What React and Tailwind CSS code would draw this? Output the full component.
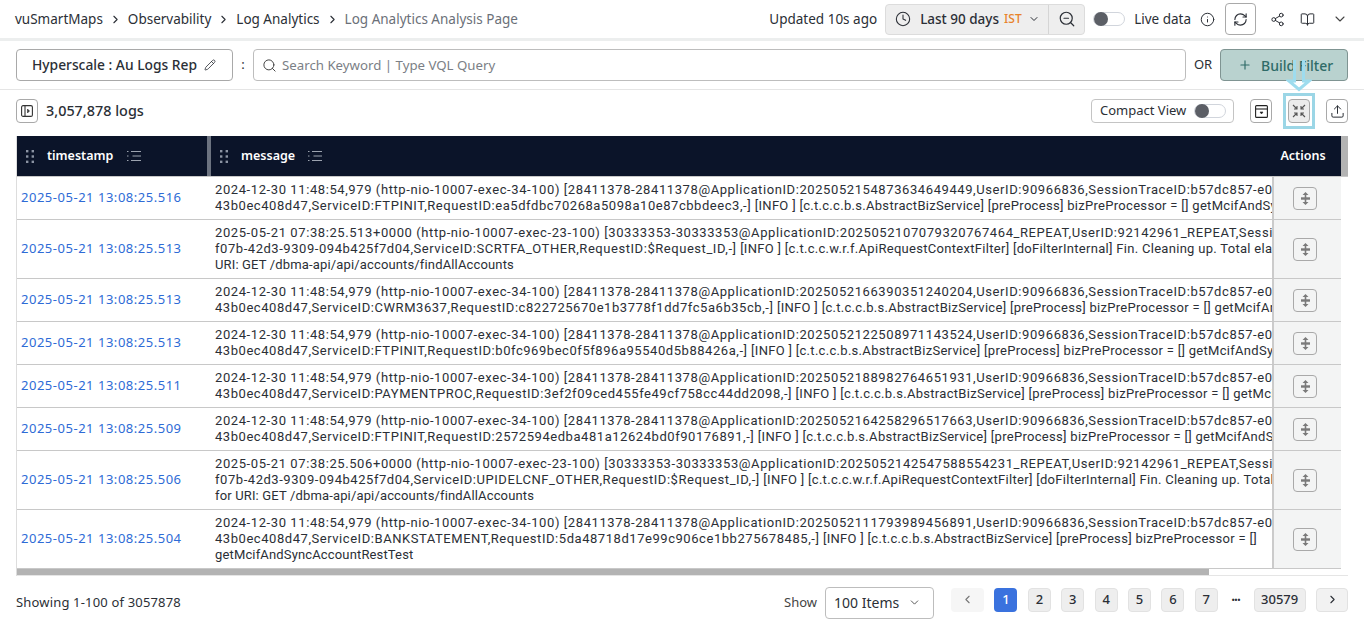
import React from "react";
import {
  BookOpen,
  ChevronDown,
  ChevronLeft,
  ChevronRight,
  Clock,
  Info,
  Pencil,
  Plus,
  RefreshCw,
  Search,
  Share2,
  Upload,
  ZoomOut,
} from "lucide-react";

const TAIL_BIZ = "[INFO ] [c.t.c.c.b.s.AbstractBizService] [preProcess] bizPreProcessor = [] getMcifAndSyncAccountRestTest";
const TAIL_CTX = "[INFO ] [c.t.c.c.w.r.f.ApiRequestContextFilter] [doFilterInternal] Fin. Cleaning up. Total elapsed time";

const bizLine = (appId) =>
  `2024-12-30 11:48:54,979 (http-nio-10007-exec-34-100) [28411378-28411378@ApplicationID:${appId},UserID:90966836,SessionTraceID:b57dc857-e0`;
const ctxLine = (stamp, appId) =>
  `2025-05-21 ${stamp}+0000 (http-nio-10007-exec-23-100) [30333353-30333353@ApplicationID:${appId}_REPEAT,UserID:92142961_REPEAT,SessionTraceID`;

const rows = [
  {
    time: "2025-05-21 13:08:25.516",
    first: bizLine("2025052154873634649449"),
    head: "43b0ec408d47,ServiceID:FTPINIT,RequestID:ea5dfdbc70268a5098a10e87cbbdeec3,-]",
    tail: TAIL_BIZ,
  },
  {
    time: "2025-05-21 13:08:25.513",
    first: ctxLine("07:38:25.513", "2025052107079320767464"),
    head: "f07b-42d3-9309-094b425f7d04,ServiceID:SCRTFA_OTHER,RequestID:$Request_ID,-]",
    tail: TAIL_CTX,
    last: "URI: GET /dbma-api/api/accounts/findAllAccounts",
  },
  {
    time: "2025-05-21 13:08:25.513",
    first: bizLine("2025052166390351240204"),
    head: "43b0ec408d47,ServiceID:CWRM3637,RequestID:c822725670e1b3778f1dd7fc5a6b35cb,-]",
    tail: TAIL_BIZ,
  },
  {
    time: "2025-05-21 13:08:25.513",
    first: bizLine("2025052122508971143524"),
    head: "43b0ec408d47,ServiceID:FTPINIT,RequestID:b0fc969bec0f5f896a95540d5b88426a,-]",
    tail: TAIL_BIZ,
  },
  {
    time: "2025-05-21 13:08:25.511",
    first: bizLine("2025052188982764651931"),
    head: "43b0ec408d47,ServiceID:PAYMENTPROC,RequestID:3ef2f09ced455fe49cf758cc44dd2098,-]",
    tail: TAIL_BIZ,
  },
  {
    time: "2025-05-21 13:08:25.509",
    first: bizLine("2025052164258296517663"),
    head: "43b0ec408d47,ServiceID:FTPINIT,RequestID:2572594edba481a12624bd0f90176891,-]",
    tail: TAIL_BIZ,
  },
  {
    time: "2025-05-21 13:08:25.506",
    first: ctxLine("07:38:25.506", "2025052142547588554231"),
    head: "f07b-42d3-9309-094b425f7d04,ServiceID:UPIDELCNF_OTHER,RequestID:$Request_ID,-]",
    tail: TAIL_CTX,
    last: "for URI: GET /dbma-api/api/accounts/findAllAccounts",
  },
  {
    time: "2025-05-21 13:08:25.504",
    first: bizLine("2025052111793989456891"),
    head: "43b0ec408d47,ServiceID:BANKSTATEMENT,RequestID:5da48718d17e99c906ce1bb275678485,-]",
    tail: "[INFO ] [c.t.c.c.b.s.AbstractBizService] [preProcess] bizPreProcessor = []",
    last: "getMcifAndSyncAccountRestTest",
  },
];

const pages = ["1", "2", "3", "4", "5", "6", "7"];

const Grip = () => (
  <svg width="8" height="13" viewBox="0 0 8 13" fill="#8b93a3">
    <rect x="0" y="0" width="2.4" height="2.4" />
    <rect x="5.6" y="0" width="2.4" height="2.4" />
    <rect x="0" y="5.3" width="2.4" height="2.4" />
    <rect x="5.6" y="5.3" width="2.4" height="2.4" />
    <rect x="0" y="10.6" width="2.4" height="2.4" />
    <rect x="5.6" y="10.6" width="2.4" height="2.4" />
  </svg>
);

const ListIcon = () => (
  <svg width="14" height="12" viewBox="0 0 14 12" stroke="#9ca3af" fill="none" strokeWidth="1">
    <path d="M4 1.5h10M5.5 6H14M4 10.5h10" />
    <path d="M0 1.5h1.5M0 6h1.5M0 10.5h1.5" />
  </svg>
);

const ShrinkIcon = () => (
  <svg width="14" height="14" viewBox="0 0 14 14" stroke="#555" fill="none" strokeWidth="1.1">
    <path d="M1 1l4 4M5 2v3H2M13 1L9 5M9 2v3h3M1 13l4-4M5 12V9H2M13 13L9 9M9 12V9h3" />
  </svg>
);

const SidebarIcon = () => (
  <svg width="12" height="12" viewBox="0 0 12 12" stroke="#333" fill="none" strokeWidth="1.1">
    <rect x="0.6" y="0.6" width="10.8" height="10.8" rx="1.5" />
    <path d="M4 0.6v10.8" />
    <path d="M6.5 4l2 2-2 2z" fill="#333" strokeWidth="0.6" />
  </svg>
);

const ArchiveIcon = () => (
  <svg width="13" height="13" viewBox="0 0 13 13" stroke="#222" fill="none" strokeWidth="1.1">
    <rect x="0.6" y="0.6" width="11.8" height="11.8" rx="1" />
    <path d="M0.6 4h11.8" />
    <path d="M5 7h3L6.5 9z" fill="#222" strokeWidth="0.6" />
  </svg>
);

const ExpandIcon = () => (
  <svg width="9" height="13" viewBox="0 0 9 13" fill="#7a7a7a">
    <path d="M4.5 0l3 3H1.5zM4.5 13l-3-3h6z" />
    <rect x="0" y="5.3" width="9" height="2.4" />
    <rect x="3.7" y="2" width="1.6" height="9" />
  </svg>
);

const Toggle = () => (
  <span className="flex h-[14px] w-[32px] items-center rounded-full border border-gray-300 bg-white">
    <span className="h-[14px] w-[14px] rounded-full bg-[#5c5f66]" />
  </span>
);

const IconButton = ({ children, active }) => (
  <button
    className={`flex h-[24px] w-[22px] items-center justify-center rounded border border-[#a9a9a9] ${
      active ? "bg-[#ececec]" : "bg-white"
    }`}
  >
    {children}
  </button>
);

const App = () => {
  return (
    <div className="flex h-[629px] w-full flex-col overflow-hidden bg-white font-['Noto_Sans',sans-serif] text-[#2b2f36]">
      {/* Top bar */}
      <header className="flex h-[38px] items-center justify-between pl-[15px] pr-[16px]">
        <nav className="flex items-center gap-[6px] text-[13.5px]">
          <span>vuSmartMaps</span>
          <ChevronRight size={13} strokeWidth={2} />
          <span>Observability</span>
          <ChevronRight size={13} strokeWidth={2} />
          <span>Log Analytics</span>
          <ChevronRight size={13} strokeWidth={2} />
          <span className="text-[#6b7078]">Log Analytics Analysis Page</span>
        </nav>
        <div className="flex items-center text-[13.5px]">
          <span className="mr-[8px]">Updated 10s ago</span>
          <div className="flex h-[31px] w-[200px] items-center rounded-sm border border-[#dcdcdc] bg-[#eeeeee]">
            <div className="flex flex-1 items-center pl-[9px]">
              <Clock size={16} strokeWidth={1.6} />
              <span className="ml-[9px] text-[13.5px] font-medium">Last 90 days</span>
              <span className="ml-[5px] text-[12px] font-medium text-[#e8832a]">IST</span>
              <ChevronDown size={12} strokeWidth={2} className="ml-[6px]" />
            </div>
            <div className="flex h-full w-[36px] items-center justify-center border-l border-[#d5d5d5]">
              <ZoomOut size={18} strokeWidth={1.6} />
            </div>
          </div>
          <span className="ml-[8px]">
            <Toggle />
          </span>
          <span className="ml-[9px]">Live data</span>
          <Info size={15} strokeWidth={1.6} className="ml-[9px]" />
          <button className="ml-[10px] flex h-[32px] w-[31px] items-center justify-center rounded border border-[#a9a9a9]">
            <RefreshCw size={15} strokeWidth={1.8} />
          </button>
          <Share2 size={15} strokeWidth={1.6} className="ml-[14px]" />
          <BookOpen size={15} strokeWidth={1.6} className="ml-[15px]" />
          <ChevronDown size={16} strokeWidth={1.6} className="ml-[17px] text-[#444]" />
        </div>
      </header>
      <div className="h-[3px] bg-[#eceeee]" />

      {/* Search row */}
      <div className="flex h-[49px] items-start border-b border-[#e5e5e5] px-[16px] pt-[8px]">
        <button className="flex h-[32px] w-[217px] items-center rounded border border-[#a9a9a9] pl-[15px] text-[13.8px] font-medium">
          Hyperscale : Au Logs Rep
          <Pencil size={12} strokeWidth={1.6} className="ml-[7px]" />
        </button>
        <span className="flex h-[32px] w-[20px] items-center justify-center text-[13px]">:</span>
        <div className="flex h-[32px] w-[933px] items-center rounded-sm border border-[#bdbdbd] pl-[8px] pt-[1px] text-[13.25px] text-[#7b7f86]">
          <Search size={15} strokeWidth={1.6} className="mr-[5px] text-[#444]" />
          Search Keyword | Type VQL Query
        </div>
        <span className="flex h-[32px] w-[34px] items-center justify-center text-[13px]">OR</span>
        <button className="flex h-[32px] w-[128px] items-center rounded border border-[#7f9492] bg-[#b9d2cf] pl-[17px] text-[14px] font-medium text-[#2f6b68]">
          <Plus size={14} strokeWidth={2} className="mr-[9px]" />
          Build Filter
        </button>
      </div>

      {/* Toolbar */}
      <div className="flex h-[46px] items-start px-[16px] pt-[9px]">
        <IconButton>
          <SidebarIcon />
        </IconButton>
        <span className="ml-[8px] flex h-[24px] items-center text-[14.4px] font-medium">3,057,878 logs</span>
        <div className="ml-auto flex items-center">
          <div className="flex h-[24px] w-[143px] items-center rounded border border-[#c4c4c4] pl-[8px] text-[13px]">
            Compact View
            <span className="ml-[8px]">
              <Toggle />
            </span>
          </div>
          <span className="ml-[16px]">
            <IconButton>
              <ArchiveIcon />
            </IconButton>
          </span>
          <span className="relative ml-[16px]">
            <IconButton active>
              <ShrinkIcon />
            </IconButton>
            {/* annotation drawn on top of the screenshot */}
            <span className="absolute -bottom-[6px] -left-[5px] -right-[5px] -top-[6px] border-[3px] border-[#9bd6e6]" />
            <svg
              className="absolute -top-[39px] left-[-2px]"
              width="26"
              height="32"
              viewBox="0 0 26 32"
              fill="none"
              stroke="#9edcee"
              strokeWidth="3"
            >
              <path d="M8.5 0v21H3l10 8.5L23 21h-5.5V0" />
            </svg>
          </span>
          <span className="ml-[16px]">
            <IconButton>
              <Upload size={15} strokeWidth={1.6} />
            </IconButton>
          </span>
        </div>
      </div>

      {/* Table */}
      <div className="mx-[16px] border-l border-[#dddddd]">
        <div className="flex h-[41px] items-stretch border-b border-[#c8c8c8] bg-[#0b1429] text-[12.5px] font-semibold text-white">
          <div className="flex w-[190px] items-center pl-[9px]">
            <Grip />
            <span className="ml-[13px]">timestamp</span>
            <span className="ml-[14px]">
              <ListIcon />
            </span>
          </div>
          <div className="w-[4px] bg-[#6c7380]" />
          <div className="flex flex-1 items-center pl-[9px]">
            <Grip />
            <span className="ml-[13px]">message</span>
            <span className="ml-[13px]">
              <ListIcon />
            </span>
          </div>
          <div className="flex w-[68px] items-center justify-center pr-[8px]">Actions</div>
          <div className="w-[7px] bg-[#b3b3b3]" />
        </div>
        {rows.map((row, i) => (
          <div key={i} className="mr-[7px] flex border-b border-[#c8c8c8] text-[13px] leading-[16px]">
            <div className="flex w-[194px] flex-none items-center pb-[2px] pl-[4px] tracking-[0.52px] text-[#2e6bd6]">
              {row.time}
            </div>
            <div className="min-w-0 flex-1 overflow-hidden py-[5px] pl-[4px] font-['Roboto',sans-serif]">
              <div className="whitespace-nowrap tracking-[0.59px]">{row.first}</div>
              <div className="whitespace-nowrap tracking-[0.3px]">
                <span className="tracking-[0.55px]">{row.head}</span> {row.tail}
              </div>
              {row.last && <div className="whitespace-nowrap tracking-[0.15px]">{row.last}</div>}
            </div>
            <div className="flex w-[69px] flex-none items-center justify-center border-l-2 border-[#cbcbcb] bg-[#f3f4f4] pr-[5px]">
              <button className="flex h-[23px] w-[24px] items-center justify-center rounded border border-[#a9a9a9]">
                <ExpandIcon />
              </button>
            </div>
          </div>
        ))}
        <div className="h-[7px] border-b border-[#e5e5e5]">
          <div className="h-[6px] w-[1192px] bg-[#b3b3b3]" />
        </div>
      </div>

      {/* Footer */}
      <footer className="flex flex-1 items-center px-[16px] text-[13px]">
        <span className="tracking-[0.17px]">Showing 1-100 of 3057878</span>
        <span className="ml-auto mr-[8px] text-[#444]">Show</span>
        <div className="flex h-[32px] w-[109px] items-center justify-between rounded-sm border border-[#bdbdbd] pl-[8px] pr-[12px] text-[14px]">
          100 Items
          <ChevronDown size={13} strokeWidth={1.8} className="text-[#555]" />
        </div>
        <div className="mb-[6px] ml-[17px] flex items-center gap-[10.4px] text-[13px] font-medium">
          <span className="flex h-[24px] w-[33px] items-center justify-center rounded-sm bg-[#f6f6f6] text-[#777]">
            <ChevronLeft size={13} />
          </span>
          {pages.map((p) => (
            <span
              key={p}
              className={`flex h-[24px] w-[23px] items-center justify-center rounded-sm ${
                p === "1" ? "bg-[#3a72de] text-white" : "border border-[#e2e2e2] bg-[#eeeeee]"
              }`}
            >
              {p}
            </span>
          ))}
          <span className="w-[15px] text-center text-[9px] leading-none tracking-[-0.5px]">•••</span>
          <span className="flex h-[24px] w-[52px] items-center justify-center rounded-sm border border-[#e2e2e2] bg-[#eeeeee]">
            30579
          </span>
          <span className="flex h-[24px] w-[32px] items-center justify-center rounded-sm border border-[#e2e2e2] bg-[#f2f2f2]">
            <ChevronRight size={13} />
          </span>
        </div>
      </footer>
    </div>
  );
};

export default App;
